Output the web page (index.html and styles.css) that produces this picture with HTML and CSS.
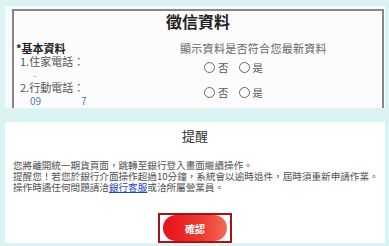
FILE: index.html
```html
<!DOCTYPE html>
<html lang="zh-Hant">
<head>
<meta charset="utf-8">
<link rel="stylesheet" href="styles.css">
</head>
<body>
<div class="top-wrap">
  <div class="credit-card">
    <h1 class="title">徵信資料</h1>
    <div class="cols">
      <div class="left">
        <div class="section">*基本資料</div>
        <div class="label">1.住家電話：</div>
        <div class="value dash">-</div>
        <div class="label l2">2.行動電話：</div>
        <div class="value phone"><span>09</span><span>7</span></div>
      </div>
      <div class="right">
        <div class="hint">顯示資料是否符合您最新資料</div>
        <div class="radios r1"><span class="radio"></span><span class="opt">否</span><span class="radio"></span><span class="opt">是</span></div>
        <div class="radios r2"><span class="radio"></span><span class="opt">否</span><span class="radio"></span><span class="opt">是</span></div>
      </div>
    </div>
  </div>
</div>
<div class="notice">
  <div class="notice-title">提醒</div>
  <div class="notice-text">
    <p>您將離開統一期貨頁面，跳轉至銀行登入畫面繼續操作。</p>
    <p>提醒您！若您於銀行介面操作超過10分鐘，系統會以逾時退件，屆時須重新申請作業。</p>
    <p>操作時遇任何問題請洽<a class="link">銀行客服</a>或洽所屬營業員。</p>
  </div>
  <div class="actions">
    <span class="focus-ring"><button class="confirm">確認</button></span>
  </div>
</div>
</body>
</html>
```
FILE: styles.css
```css
html, body {
  margin: 0;
  padding: 0;
}
body {
  background: #dcf3f4;
  width: 389px;
  height: 246px;
  overflow: hidden;
  font-family: "Noto Sans CJK TC", "Noto Sans", sans-serif;
}
.top-wrap {
  margin: 6px 0 0 5px;
  width: 380px;
  height: 102px;
  padding: 3px 1px 0 7px;
  box-sizing: border-box;
  background: #f5fbfb;
}
.credit-card {
  height: 99px;
  border: 2px solid #878787;
  border-bottom: none;
  background: #fcfcfc;
  box-sizing: border-box;
  overflow: hidden;
}
.title {
  margin: 0;
  font-size: 16px;
  line-height: 20px;
  font-weight: 700;
  text-align: center;
  color: #222;
}
.cols {
  display: flex;
  margin-top: 11px;
}
.left {
  width: 164px;
  padding-left: 2px;
}
.section {
  font-size: 11px;
  line-height: 13px;
  font-weight: 700;
  color: #222;
}
.label {
  font-size: 11px;
  line-height: 13px;
  color: #555;
  padding-left: 4px;
}
.value {
  font-size: 10px;
  line-height: 12px;
}
.dash {
  color: #999;
  margin-top: 1px;
  padding-left: 17px;
}
.phone {
  color: #4d7fc4;
  margin-top: 1px;
  padding-left: 14px;
  display: flex;
  gap: 40px;
}
.right {
  flex: 1;
}
.hint {
  font-size: 11px;
  line-height: 13px;
  color: #666;
  letter-spacing: 0.3px;
}
.radios {
  display: flex;
  align-items: center;
  padding-left: 24px;
  height: 14px;
}
.r1 { margin-top: 5px; }
.r2 { margin-top: 11px; }
.radio {
  width: 9px;
  height: 9px;
  border: 1px solid #666;
  border-radius: 50%;
  background: #fff;
}
.opt {
  font-size: 10.5px;
  color: #555;
  margin: 0 10px 0 3px;
}
.notice {
  margin: 14px 0 0 5px;
  width: 380px;
  height: 121px;
  background: #fff;
  padding: 6px 0 0 8px;
  box-sizing: border-box;
}
.notice-title {
  text-align: center;
  font-size: 13px;
  line-height: 16px;
  color: #333;
  margin-left: -8px;
}
.notice-text {
  margin-top: 16px;
  font-size: 9.6px;
  line-height: 11px;
  color: #505050;
  white-space: nowrap;
}
.notice-text p {
  margin: 0;
}
.link {
  color: #2544c4;
  text-decoration: underline;
}
.actions {
  display: flex;
  justify-content: center;
  margin-top: 20px;
  margin-left: -8px;
}
.focus-ring {
  display: block;
  border: 2px solid #a8101c;
  padding: 0 3px;
}
.confirm {
  display: block;
  width: 64px;
  height: 26px;
  border: none;
  border-radius: 13px;
  background: linear-gradient(90deg, #e4121a 0%, #ee3a32 60%, #f26a58 100%);
  color: #fff;
  font-family: "Noto Sans CJK TC", sans-serif;
  font-size: 10px;
  font-weight: 700;
  padding: 0;
}
```
